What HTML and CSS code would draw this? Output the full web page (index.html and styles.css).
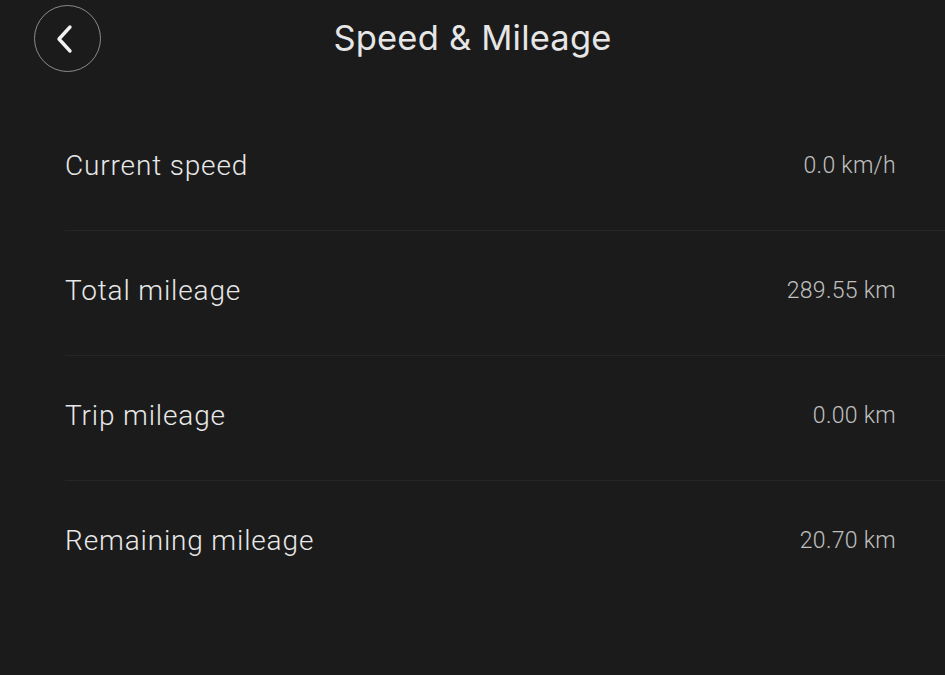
FILE: index.html
```html
<!DOCTYPE html>
<html lang="en">
<head>
<meta charset="utf-8">
<title>Speed &amp; Mileage</title>
<link rel="stylesheet" href="styles.css">
</head>
<body>
<div class="screen">
  <header class="topbar">
    <button class="back" aria-label="Back">
      <svg width="24" height="30" viewBox="0 0 24 30"><path d="M16 3 L5 15 L16 27" fill="none" stroke="#f2f2f2" stroke-width="3.4" stroke-linecap="round" stroke-linejoin="round"/></svg>
    </button>
    <h1 class="title">Speed &amp; Mileage</h1>
  </header>
  <ul class="list">
    <li class="row"><span class="label">Current speed</span><span class="value">0.0 km/h</span></li>
    <li class="row"><span class="label">Total mileage</span><span class="value">289.55 km</span></li>
    <li class="row"><span class="label">Trip mileage</span><span class="value">0.00 km</span></li>
    <li class="row"><span class="label">Remaining mileage</span><span class="value">20.70 km</span></li>
  </ul>
</div>
</body>
</html>
```
FILE: styles.css
```css
html, body {
  margin: 0;
  padding: 0;
  background: #1b1b1b;
}
.screen {
  width: 945px;
  height: 675px;
  background: #1b1b1b;
  overflow: hidden;
  font-family: Roboto, "Liberation Sans", sans-serif;
}
.topbar {
  position: relative;
  height: 76px;
  display: flex;
  align-items: center;
  justify-content: center;
}
.back {
  position: absolute;
  left: 34px;
  top: 5px;
  width: 67px;
  height: 67px;
  border-radius: 50%;
  border: 1.5px solid #8a8a8a;
  background: transparent;
  display: flex;
  align-items: center;
  justify-content: center;
  padding: 0 4px 0 0;
  box-sizing: border-box;
}
.title {
  margin: 0 0 2px 0;
  font-family: Inter, "Noto Sans", sans-serif;
  font-weight: 400;
  font-size: 34.5px;
  color: #e6e6e6;
  letter-spacing: 0.2px;
}
.list {
  list-style: none;
  margin: 30px 0 0 65px;
  padding: 0;
}
.row {
  height: 118px;
  box-sizing: content-box;
  display: flex;
  align-items: center;
  justify-content: space-between;
  padding: 0 49px 6px 0;
  border-bottom: 1px solid #262626;
}
.row:last-child {
  border-bottom: none;
}
.label {
  font-size: 28px;
  font-weight: 300;
  color: #e8e8e8;
  letter-spacing: 0.85px;
}
.value {
  font-size: 23px;
  font-weight: 300;
  color: #c0c0c0;
  letter-spacing: 0.3px;
}
```
